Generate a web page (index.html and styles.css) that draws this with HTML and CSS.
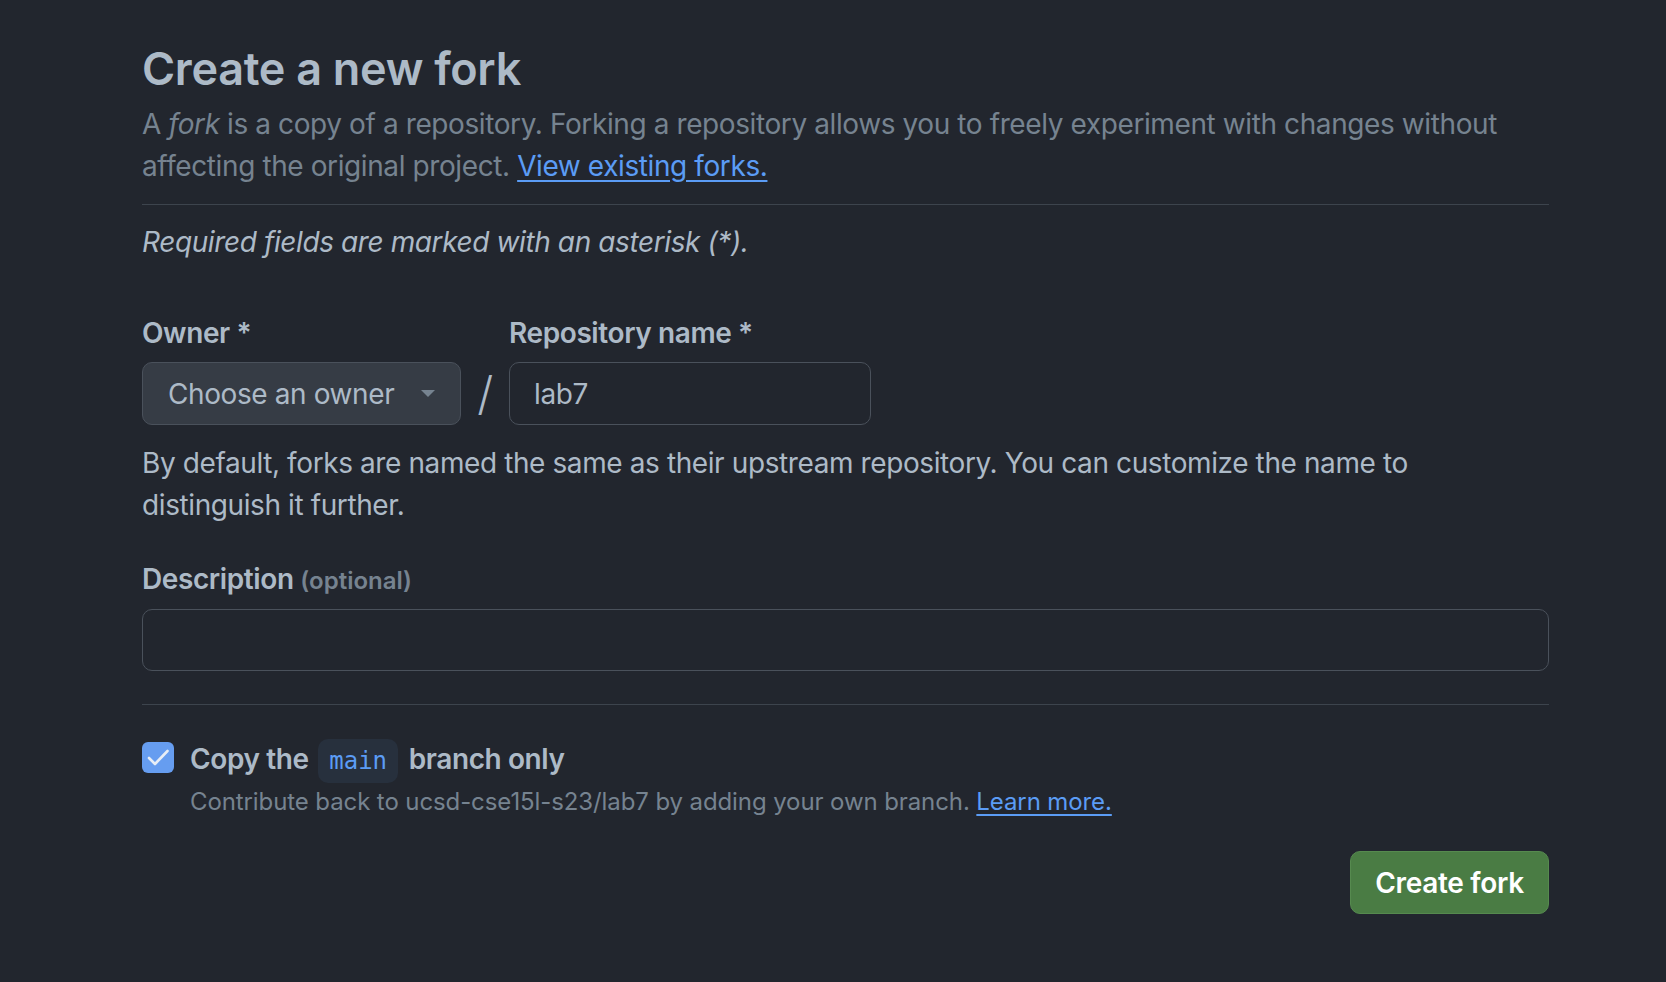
FILE: index.html
```html
<!DOCTYPE html>
<html lang="en">
<head>
<meta charset="utf-8">
<title>Create a new fork</title>
<link rel="stylesheet" href="styles.css">
</head>
<body>
<main class="page">
  <div class="subhead">
    <h1 class="title">Create a new fork</h1>
    <p class="lead">A <em>fork</em> is a copy of a repository. Forking a repository allows you to freely experiment with changes without affecting the original project. <a class="link" href="#">View existing forks.</a></p>
  </div>
  <p class="required">Required fields are marked with an asterisk (*).</p>

  <div class="name-row">
    <div class="field owner">
      <label class="label">Owner *</label>
      <div class="select">
        <span>Choose an owner</span>
        <svg class="caret" width="16" height="8" viewBox="0 0 16 8"><path d="M1 0h14L8 7z" fill="#768390"/></svg>
      </div>
    </div>
    <span class="slash">/</span>
    <div class="field repo">
      <label class="label">Repository name *</label>
      <div class="input repo-input">lab7</div>
    </div>
  </div>
  <p class="note">By default, forks are named the same as their upstream repository. You can customize the name to distinguish it further.</p>

  <div class="field desc">
    <label class="label desc-label">Description <span class="opt">(optional)</span></label>
    <div class="input desc-input"></div>
  </div>

  <div class="divider"></div>

  <div class="check-row">
    <span class="checkbox">
      <svg width="32" height="31" viewBox="0 0 32 31"><path d="M7 16l6 6L25.5 9" fill="none" stroke="#e8eef6" stroke-width="2.6" stroke-linecap="round" stroke-linejoin="round"/></svg>
    </span>
    <div class="check-text">
      <div class="check-label">Copy the <code class="branch">main</code> branch only</div>
      <div class="check-note">Contribute back to ucsd-cse15l-s23/lab7 by adding your own branch. <a class="link" href="#">Learn more.</a></div>
    </div>
  </div>

  <div class="actions">
    <button class="btn-primary" type="button">Create fork</button>
  </div>
</main>
</body>
</html>
```
FILE: styles.css
```css
html, body {
  margin: 0;
  padding: 0;
  background: #22262e;
}
body {
  font-family: Inter, "Liberation Sans", Arial, sans-serif;
  color: #adbac7;
  font-size: 28px;
  line-height: 42px;
  letter-spacing: -0.4px;
}
.page {
  width: 1407px;
  padding: 39px 0 0 142px;
}
.title {
  margin: 0;
  font-size: 45px;
  line-height: 60px;
  font-weight: 600;
  letter-spacing: -0.3px;
  color: #adbac7;
}
.lead {
  margin: 4px 0 0;
  color: #768390;
}
.subhead {
  padding-bottom: 17px;
  border-bottom: 1px solid #3d444d;
}
.link {
  color: #5b9cf5;
  text-decoration: underline;
  text-underline-offset: 4px;
}
.required {
  margin: 16px 0 0;
  font-style: italic;
  color: #adbac7;
}
.name-row {
  display: flex;
  align-items: flex-end;
  margin-top: 49px;
}
.field {
  display: flex;
  flex-direction: column;
}
.label {
  font-weight: 600;
  color: #adbac7;
  margin-bottom: 8px;
}
.select {
  box-sizing: border-box;
  width: 319px;
  height: 63px;
  display: flex;
  align-items: center;
  justify-content: space-between;
  padding: 0 24px 0 25px;
  background: #363c45;
  border: 1px solid #4a515b;
  border-radius: 10px;
  color: #adbac7;
}
.caret {
  display: block;
}
.slash {
  width: 48px;
  height: 63px;
  text-align: center;
  font-size: 46px;
  line-height: 63px;
  font-weight: 300;
  color: #adbac7;
}
.input {
  box-sizing: border-box;
  height: 63px;
  display: flex;
  align-items: center;
  padding: 0 24px;
  background: #22262e;
  border: 1px solid #4a515b;
  border-radius: 10px;
  color: #adbac7;
}
.repo-input {
  width: 362px;
}
.note {
  margin: 17px 0 0;
  max-width: 1300px;
  color: #adbac7;
}
.desc {
  margin-top: 32px;
}
.desc-label {
  margin-bottom: 7px;
}
.opt {
  font-size: 24px;
  letter-spacing: 0;
  color: #768390;
}
.desc-input {
  width: 1407px;
  height: 62px;
}
.divider {
  margin-top: 33px;
  border-top: 1px solid #3d444d;
}
.check-row {
  display: flex;
  align-items: flex-start;
  margin-top: 32px;
}
.checkbox {
  box-sizing: border-box;
  width: 32px;
  height: 31px;
  margin-top: 5px;
  border-radius: 6px;
  background: #669df0;
  display: flex;
  align-items: center;
  justify-content: center;
  flex: none;
}
.checkbox svg {
  display: block;
}
.check-text {
  margin-left: 16px;
}
.check-label {
  font-weight: 600;
  color: #adbac7;
  line-height: 44px;
}
.branch {
  display: inline-block;
  font-family: "DejaVu Sans Mono", "Liberation Mono", monospace;
  font-size: 24px;
  font-weight: 400;
  letter-spacing: 0;
  color: #5b9cf5;
  background: #27303d;
  border-radius: 10px;
  padding: 0 11px;
  line-height: 44px;
  margin: 0 4px 0 3px;
}
.check-note {
  font-size: 24px;
  line-height: 36px;
  margin-top: 1px;
  color: #768390;
  letter-spacing: -0.1px;
}
.actions {
  display: flex;
  justify-content: flex-end;
  margin-top: 31px;
}
.btn-primary {
  box-sizing: border-box;
  width: 199px;
  height: 63px;
  font-family: Inter, "Liberation Sans", Arial, sans-serif;
  font-size: 28px;
  font-weight: 600;
  letter-spacing: -0.3px;
  color: #ffffff;
  background: #4a7c44;
  border: 1px solid #568a4f;
  border-radius: 10px;
}
```
